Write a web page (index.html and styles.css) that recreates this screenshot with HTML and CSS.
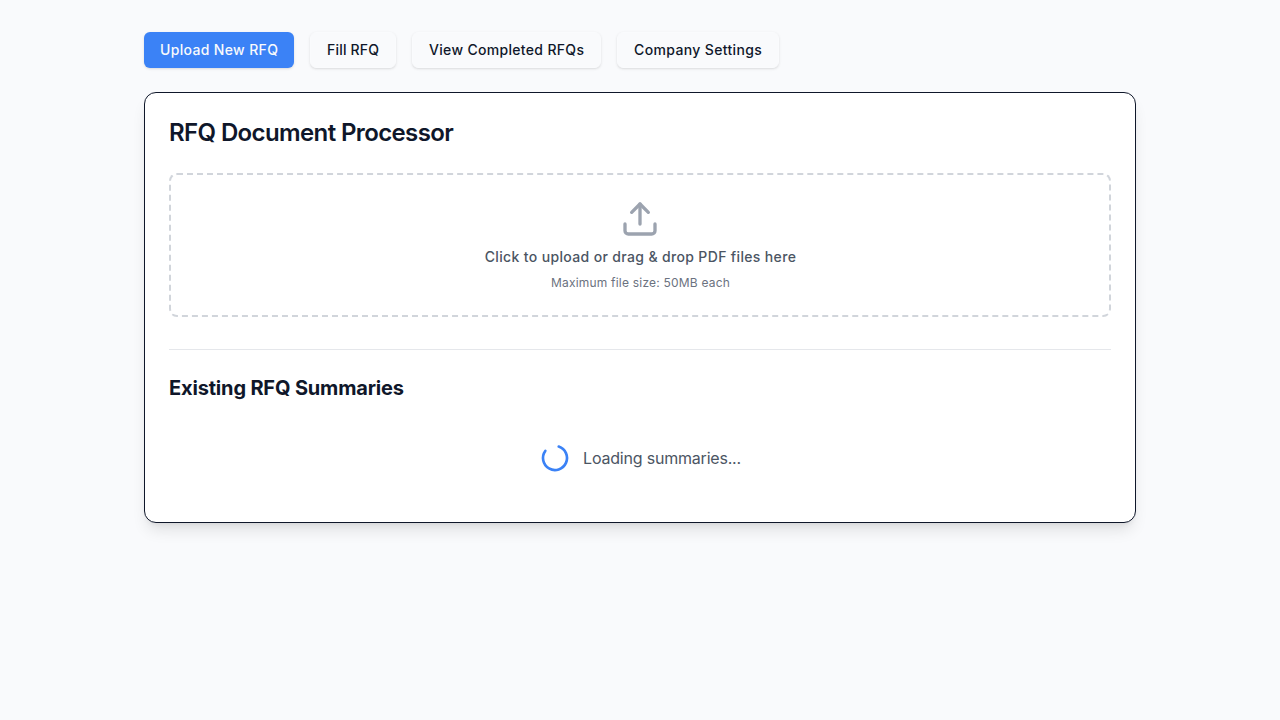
FILE: index.html
```html
<!DOCTYPE html>
<html lang="en">
<head>
<meta charset="utf-8">
<title>RFQ Document Processor</title>
<link rel="stylesheet" href="styles.css">
</head>
<body>
<main class="page">
  <nav class="tabs">
    <button class="tab tab-active">Upload New RFQ</button>
    <button class="tab tab-fill">Fill RFQ</button>
    <button class="tab tab-completed">View Completed RFQs</button>
    <button class="tab tab-settings">Company Settings</button>
  </nav>
  <section class="card">
    <h1 class="title">RFQ Document Processor</h1>
    <div class="dropzone">
      <svg class="upload-icon" viewBox="0 0 24 24" fill="none" stroke="currentColor" stroke-width="2" stroke-linecap="round" stroke-linejoin="round"><path d="M21 15v4a2 2 0 0 1-2 2H5a2 2 0 0 1-2-2v-4"/><polyline points="17 8 12 3 7 8"/><line x1="12" x2="12" y1="3" y2="15"/></svg>
      <p class="drop-text">Click to upload or drag &amp; drop PDF files here</p>
      <p class="drop-hint">Maximum file size: 50MB each</p>
    </div>
    <div class="summaries">
      <h2 class="subtitle">Existing RFQ Summaries</h2>
      <div class="loading">
        <svg class="spinner" viewBox="0 0 24 24" fill="none" stroke="currentColor" stroke-width="2" stroke-linecap="round" stroke-linejoin="round"><path d="M21 12a9 9 0 1 1-6.219-8.56"/></svg>
        <span class="loading-text">Loading summaries...</span>
      </div>
    </div>
  </section>
</main>
</body>
</html>
```
FILE: styles.css
```css
* { box-sizing: border-box; margin: 0; padding: 0; }
body { background: #f9fafc; color: #0f172a; font-family: Inter, sans-serif; line-height: 1.5; }
.page { max-width: 1024px; margin: 0 auto; padding: 32px 16px; }
.tabs { display: flex; gap: 16px; margin-bottom: 24px; }
.tab { height: 36px; padding: 0 16px; border: 1px solid #fafbfd; border-radius: 6px; background: #f9fafc; color: #0f172a; font: 500 14px/20px Inter, sans-serif; letter-spacing: .34px; white-space: nowrap; box-shadow: 0 1px 3px rgba(0, 0, 0, .1), 0 1px 2px -1px rgba(0, 0, 0, .1); }
.tab-active { width: 150px; border: 0; background: #3b82f6; color: #f8fafc; }
.tab-fill { width: 86px; letter-spacing: .2px; }
.tab-completed { width: 189px; letter-spacing: .32px; }
.tab-settings { width: 162px; letter-spacing: .36px; }
.card { background: #fff; border: 1px solid #0f172a; border-radius: 12px; padding: 24px; box-shadow: 0 10px 15px -3px rgba(0, 0, 0, .1), 0 4px 6px -4px rgba(0, 0, 0, .1); }
.title { font-size: 24px; line-height: 32px; font-weight: 600; letter-spacing: -.62px; margin-bottom: 24px; }
.dropzone { display: flex; flex-direction: column; align-items: center; height: 144px; padding: 24px; border: 2px dashed #d1d5db; border-radius: 8px; }
.upload-icon { width: 40px; height: 40px; color: #9ca3af; margin-bottom: 8px; }
.drop-text { padding-left: 1px; font-size: 14px; line-height: 20px; font-weight: 500; letter-spacing: .35px; color: #4b5563; }
.drop-hint { padding-left: 1px; font-size: 12px; line-height: 16px; letter-spacing: .2px; color: #6b7280; margin-top: 8px; }
.summaries { margin-top: 32px; padding-top: 24px; border-top: 1px solid #e5e7eb; }
.subtitle { font-size: 20px; line-height: 28px; font-weight: 700; letter-spacing: -.17px; margin-bottom: 16px; }
.loading { display: flex; justify-content: center; align-items: center; height: 80px; }
.spinner { width: 32px; height: 32px; color: #3b82f6; transform: rotate(-72deg); }
.loading-text { margin-left: 12px; font-size: 16px; letter-spacing: -.2px; color: #4b5563; }
```
